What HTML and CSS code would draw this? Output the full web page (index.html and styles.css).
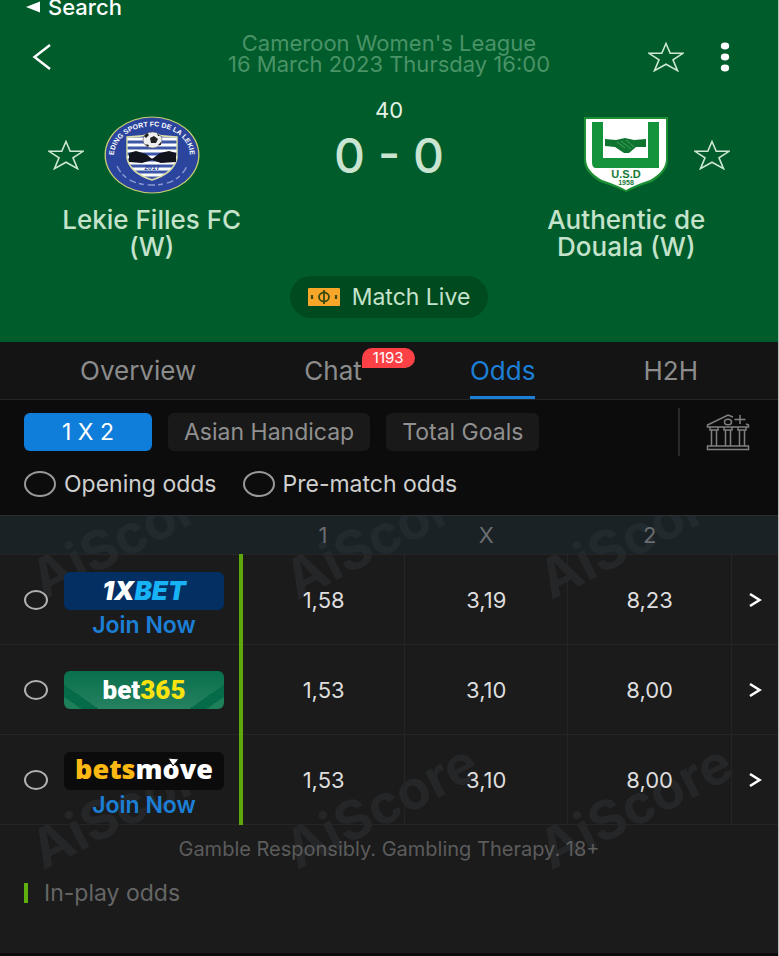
FILE: index.html
```html
<!DOCTYPE html>
<html lang="en">
<head>
  <meta charset="UTF-8" />
  <meta name="viewport" content="width=device-width, initial-scale=1.0" />
  <title>Lekie Filles FC (W) - Authentic de Douala (W) Odds</title>
  <link rel="stylesheet" href="styles.css">
</head>
<body>
  <svg class="defs" aria-hidden="true">
    <symbol id="star" viewBox="0 0 36 30">
      <path d="M18 1.5 L22.2 11.3 H35 L25 17.8 L29.5 28.6 L18 22.2 L6.5 28.6 L11 17.8 L1 11.3 H13.8 Z" fill="none" stroke="currentColor" stroke-width="1.6" />
    </symbol>
    <symbol id="arrow" viewBox="0 0 14 16">
      <path d="M2 2 L11.5 8 L2 14" fill="none" stroke="currentColor" stroke-width="2.6" />
    </symbol>
  </svg>

  <header class="match">
    <a class="back-app" href="#">
      <svg width="14" height="12" viewBox="0 0 14 12"><path d="M0 6 L14 0.5 V11.5 Z" fill="currentColor" /></svg>
      Search
    </a>

    <div class="topbar">
      <button class="icon-btn back" aria-label="Back">
        <svg width="20" height="28" viewBox="0 0 20 28"><path d="M18 2 L2.5 14 L18 26" fill="none" stroke="currentColor" stroke-width="2.4" /></svg>
      </button>
      <div class="league">
        <div>Cameroon Women's League</div>
        <div>16 March 2023 Thursday 16:00</div>
      </div>
      <div class="actions">
        <button class="icon-btn star" aria-label="Favourite match"><svg width="36" height="30"><use href="#star" /></svg></button>
        <button class="icon-btn" aria-label="More">
          <svg width="10" height="30" viewBox="0 0 10 30" fill="currentColor">
            <ellipse cx="5" cy="4" rx="4.2" ry="3.4" /><ellipse cx="5" cy="15" rx="4.2" ry="3.4" /><ellipse cx="5" cy="26" rx="4.2" ry="3.4" />
          </svg>
        </button>
      </div>
    </div>

    <div class="teams">
      <div class="team home">
        <button class="icon-btn star" aria-label="Favourite Lekie Filles FC"><svg width="36" height="30"><use href="#star" /></svg></button>
        <svg class="crest" width="96" height="78" viewBox="0 0 96 78">
          <defs>
            <path id="ring" d="M11 46 A38 29 0 1 1 85 46" />
            <clipPath id="shield"><path d="M23 21 Q36 21 48 18 Q60 21 73 21 V42 Q70 57 48 64 Q26 57 23 42 Z" /></clipPath>
          </defs>
          <ellipse cx="48" cy="39" rx="47.5" ry="38.5" fill="#c9cf72" />
          <ellipse cx="48" cy="39" rx="46.2" ry="37.4" fill="#2b459e" />
          <text class="crest-text"><textPath href="#ring" startOffset="50%" text-anchor="middle">EDING SPORT FC DE LA LEKIE</textPath></text>
          <path d="M13 50 Q22 69 48 69 Q74 69 83 50" fill="none" stroke="#8d9dd2" stroke-width="1.4" stroke-dasharray="7 3 5 4" />
          <g clip-path="url(#shield)">
            <rect x="20" y="16" width="56" height="50" fill="#3c56a8" />
            <path d="M20 23H76M20 29H76M20 35H76M20 41H76M20 47H76M20 53H76M20 59H76" stroke="#fff" stroke-width="3" />
          </g>
          <path d="M23 21 Q36 21 48 18 Q60 21 73 21 V42 Q70 57 48 64 Q26 57 23 42 Z" fill="none" stroke="#dcdfa8" stroke-width="1.4" />
          <path d="M25 37 L32 35 L42 38 L48 43 L56 37 L65 35 L72 37 V46 L57 47 L48 44 L38 47 L25 46 Z" fill="#11131d" />
          <text class="crest-year" x="48" y="54" text-anchor="middle">2017</text>
          <ellipse cx="48.5" cy="24" rx="9.5" ry="8" fill="#eee" stroke="#555" stroke-width=".6" />
          <path d="M46 22 L50 20 L54 23 L52 27 L47 27 Z M40 20 L43 17 L45 19 L42 22 Z M53 17 L56 20 L54 20 Z M41 28 L45 29 L44 31 Z M54 29 L57 26 L57 29 Z" fill="#222" />
        </svg>
        <h2>Lekie Filles FC (W)</h2>
      </div>

      <div class="score">
        <div class="minute">40</div>
        <div class="goals">0 - 0</div>
      </div>

      <div class="team away">
        <svg class="crest" width="96" height="78" viewBox="0 0 96 78">
          <path d="M6 1 H90 V44 Q90 56 74 66 Q58 71 48 76 Q38 71 22 66 Q6 56 6 44 Z" fill="#1d8f35" />
          <path d="M8 3 H88 V43 Q88 55 72 64 Q57 69 48 74 Q39 69 24 64 Q8 55 8 43 Z" fill="#fff" />
          <path d="M14 6 H25 V42 H70 V6 H81 V52 H18 Q14 52 14 46 Z" fill="#15933a" />
          <path d="M27 23 L38 24 L47 22 L56 24 L68 23 V31 L58 31 L51 37 L46 37 L37 31 L27 30 Z" fill="#0f7430" />
          <path d="M39 26 L47 32 M43 25 L53 33 M48 24 L56 31" stroke="#3fa35b" stroke-width="1" fill="none" />
          <text class="usd" x="48" y="62" text-anchor="middle">U.S.D</text>
          <text class="usd-year" x="48" y="69" text-anchor="middle">1958</text>
        </svg>
        <button class="icon-btn star" aria-label="Favourite Authentic de Douala"><svg width="36" height="30"><use href="#star" /></svg></button>
        <h2>Authentic de Douala (W)</h2>
      </div>
    </div>

    <button class="live">
      <svg width="32" height="18" viewBox="0 0 32 18">
        <rect width="32" height="18" rx="1" fill="#f7a62a" />
        <ellipse cx="16" cy="9" rx="5" ry="4.5" fill="none" stroke="#3a4a10" stroke-width="1.8" />
        <path d="M16 2 V16" stroke="#3a4a10" stroke-width="1.8" />
        <path d="M4 7 V11 M28 7 V11" stroke="#3a4a10" stroke-width="2.2" />
      </svg>
      Match Live
    </button>
  </header>

  <nav class="tabs">
    <a href="#">Overview</a>
    <a href="#">Chat<span class="badge">1193</span></a>
    <a href="#" class="active">Odds</a>
    <a href="#">H2H</a>
  </nav>

  <section class="filters">
    <div class="markets">
      <button class="chip selected">1 X 2</button>
      <button class="chip">Asian Handicap</button>
      <button class="chip">Total Goals</button>
      <button class="icon-btn bookmakers" aria-label="Bookmakers">
        <svg width="44" height="38" viewBox="0 0 44 38" fill="none" stroke="currentColor" stroke-width="1.5">
          <path d="M27 4 L22 2 L1.5 12 V14 H42.5 V12 L40 11" />
          <ellipse cx="22" cy="9" rx="3.5" ry="2.8" />
          <path d="M34 2 V11 M28.5 6.5 H39.5" />
          <path d="M4 14 V17 H12 V14 M18 14 V17 H26 V14 M32 14 V17 H40 V14" />
          <path d="M5.5 17 V33 M10.5 17 V33 M19.5 17 V33 M24.5 17 V33 M33.5 17 V33 M38.5 17 V33" />
          <rect x="1.5" y="33" width="41" height="3.5" />
        </svg>
      </button>
    </div>
    <div class="moments">
      <label><input type="radio" name="moment" value="opening"> Opening odds</label>
      <label><input type="radio" name="moment" value="prematch"> Pre-match odds</label>
    </div>
  </section>

  <main class="odds">
    <div class="watermarks" aria-hidden="true">
      <span>AiScore</span><span>AiScore</span><span>AiScore</span>
      <span>AiScore</span><span>AiScore</span><span>AiScore</span>
    </div>

    <table>
      <thead>
        <tr>
          <th class="book-col"></th>
          <th>1</th>
          <th>X</th>
          <th>2</th>
          <th class="more-col"></th>
        </tr>
      </thead>
      <tbody>
        <tr>
          <td class="book-col">
            <div class="book">
              <input type="radio" name="book" aria-label="1XBET">
              <div class="offer">
                <div class="logo xbet">1X<span>BET</span></div>
                <a class="join" href="#">Join Now</a>
              </div>
            </div>
          </td>
          <td>1,58</td>
          <td>3,19</td>
          <td>8,23</td>
          <td><button class="icon-btn" aria-label="1XBET details"><svg width="14" height="16"><use href="#arrow" /></svg></button></td>
        </tr>
        <tr>
          <td class="book-col">
            <div class="book">
              <input type="radio" name="book" aria-label="bet365">
              <div class="logo bet365">bet<span>365</span></div>
            </div>
          </td>
          <td>1,53</td>
          <td>3,10</td>
          <td>8,00</td>
          <td><button class="icon-btn" aria-label="bet365 details"><svg width="14" height="16"><use href="#arrow" /></svg></button></td>
        </tr>
        <tr>
          <td class="book-col">
            <div class="book">
              <input type="radio" name="book" aria-label="betsmove">
              <div class="offer">
                <div class="logo betsmove"><span>bets</span>m<b>o<svg viewBox="0 0 14 10"><path d="M1 0 L12 1 L6 8 Z" fill="#fff" stroke="#0b0b0b" stroke-width="1" /></svg></b>ve</div>
                <a class="join" href="#">Join Now</a>
              </div>
            </div>
          </td>
          <td>1,53</td>
          <td>3,10</td>
          <td>8,00</td>
          <td><button class="icon-btn" aria-label="betsmove details"><svg width="14" height="16"><use href="#arrow" /></svg></button></td>
        </tr>
      </tbody>
    </table>

    <p class="notice">Gamble Responsibly. Gambling Therapy. 18+</p>
    <p class="legend">In-play odds</p>
  </main>
</body>
</html>
```

FILE: styles.css
```css
* {
  box-sizing: border-box;
}

body {
  margin: 0;
  min-height: 100vh;
  display: flex;
  flex-direction: column;
  font-family: Inter, "Liberation Sans", sans-serif;
  font-size: 22px;
  color: #ddd;
  background: #1b1b1b;
  border-right: 1px solid #b9bdb9;
}

button {
  font: inherit;
  border: 0;
  cursor: pointer;
}

a {
  color: inherit;
  text-decoration: none;
}

h2, p {
  margin: 0;
}

.defs {
  position: absolute;
  width: 0;
  height: 0;
}

.icon-btn {
  display: flex;
  padding: 0;
  color: #fff;
  background: none;
}

.icon-btn.star {
  color: #cfe8d3;
}

/* match header */
.match {
  display: flex;
  flex-direction: column;
  background: #005c2b;
  padding-bottom: 24px;
}

.back-app {
  display: flex;
  align-items: center;
  gap: 8px;
  height: 14px;
  padding-left: 26px;
  font-size: 22px;
  font-weight: 500;
  line-height: 14px;
  color: #fff;
}

.topbar {
  display: grid;
  grid-template-columns: 1fr auto 1fr;
  align-items: center;
  height: 86px;
  padding: 0 32px;
}

.league {
  font-size: 22px;
  line-height: 21px;
  text-align: center;
  color: #4a9367;
  padding-bottom: 6px;
}

.actions {
  display: flex;
  justify-content: flex-end;
  gap: 36px;
  padding-right: 16px;
}

.teams {
  display: grid;
  grid-template-columns: 39fr 22fr 39fr;
}

.team {
  display: grid;
  grid-template-columns: 1fr 96px 1fr;
  column-gap: 20px;
  align-items: center;
  padding-top: 16px;
}

.crest {
  grid-column: 2;
}

.home .star {
  justify-self: end;
}

.team h2 {
  grid-column: 1 / -1;
  justify-self: center;
  width: 208px;
  margin-top: 12px;
  font-size: 26px;
  font-weight: 500;
  line-height: 27px;
  text-align: center;
  color: #c5e3cb;
}

.crest-text {
  font: bold 7px "Liberation Sans", sans-serif;
  fill: #fff;
}

.crest-year {
  font: bold 7px "Liberation Sans", sans-serif;
  fill: #2b459e;
}

.usd {
  font: bold 11px "Liberation Sans", sans-serif;
  fill: #157a34;
}

.usd-year {
  font: bold 7px "Liberation Sans", sans-serif;
  fill: #157a34;
}

.score {
  text-align: center;
}

.minute {
  font-size: 22px;
  line-height: 20px;
  color: #e4f3e6;
}

.goals {
  margin-top: 12px;
  font-size: 48px;
  font-weight: 500;
  line-height: 48px;
  white-space: nowrap;
  color: #c9e4d0;
}

.live {
  display: flex;
  align-items: center;
  gap: 12px;
  height: 42px;
  margin: 16px auto 0;
  padding: 0 18px;
  font-size: 23px;
  color: #c5e3cb;
  background: #004a20;
  border-radius: 21px;
}

/* tabs */
.tabs {
  display: flex;
  justify-content: space-between;
  height: 58px;
  padding: 0 80px;
  font-size: 26px;
  line-height: 57px;
  color: #8c8c8c;
  background: #141414;
  border-bottom: 1px solid #252525;
}

.tabs a {
  position: relative;
}

.tabs .active {
  color: #1c7fd6;
  border-bottom: 3px solid #1c7fd6;
}

.badge {
  position: absolute;
  top: 6px;
  left: 100%;
  padding: 0 11px;
  font-size: 15px;
  line-height: 20px;
  color: #fff;
  background: #fb4145;
  border-radius: 10px 10px 10px 0;
}

/* market filters */
.filters {
  padding: 8px 28px 17px 24px;
  background: #0c0c0c;
}

.markets {
  display: flex;
  align-items: center;
  gap: 16px;
  height: 48px;
}

.chip {
  height: 38px;
  min-width: 128px;
  padding: 0 16px;
  font-size: 23px;
  white-space: nowrap;
  color: #909090;
  background: #191919;
  border-radius: 6px;
}

.chip.selected {
  color: #fff;
  background: #0f7edb;
}

.bookmakers {
  align-items: center;
  height: 48px;
  margin-left: auto;
  padding-left: 26px;
  color: #808080;
  border-left: 2px solid #2a2a2a;
}

.moments {
  display: flex;
  gap: 26px;
  margin-top: 14px;
  font-size: 23px;
  line-height: 28px;
  color: #d0d0d0;
}

.moments label {
  display: flex;
  align-items: center;
  gap: 8px;
}

input[type="radio"] {
  appearance: none;
  flex: none;
  width: 24px;
  height: 20px;
  margin: 0;
  border: 2px solid #b0b0b0;
  border-radius: 50%;
}

input[type="radio"]:checked {
  background: #0f7edb;
}

.moments input[type="radio"] {
  width: 32px;
  height: 26px;
  border-color: #999;
}

/* odds table */
.odds {
  position: relative;
  flex: 1;
  border-bottom: 3px solid #0c0c0c;
}

.watermarks {
  position: absolute;
  inset: 0 16px 0 0;
  display: grid;
  grid-template-columns: repeat(3, 1fr);
  grid-auto-rows: 40px;
  row-gap: 230px;
  place-items: center;
  overflow: hidden;
  font-size: 54px;
  font-weight: 700;
  color: #252627;
}

.watermarks span {
  transform: rotate(-27deg);
}

table {
  position: relative;
  width: 100%;
  table-layout: fixed;
  border-collapse: collapse;
}

th {
  width: 21%;
  height: 39px;
  padding: 0;
  font-weight: 400;
  color: #6a6d6f;
  background: rgba(28, 52, 62, 0.3);
  border-top: 1px solid #2c2f30;
}

th.book-col {
  width: 238px;
}

th.more-col {
  width: 6%;
}

td {
  height: 90px;
  padding: 0;
  text-align: center;
  border: 1px solid #252525;
}

td:last-child {
  border-right: 0;
}

td .icon-btn {
  margin: 0 auto;
}

td.book-col {
  border-left: 0;
  border-right: 4px solid #5fa80c;
}

.book {
  display: flex;
  align-items: center;
  gap: 16px;
  padding-left: 24px;
}

.offer {
  padding-top: 12px;
}

.logo {
  width: 160px;
  height: 38px;
  line-height: 38px;
  color: #fff;
  border-radius: 6px;
}

.xbet {
  font-size: 26px;
  font-weight: 900;
  font-style: italic;
  background: #042f63;
}

.xbet span {
  color: #17b3f5;
}

.bet365 {
  font-family: Roboto, sans-serif;
  font-size: 26px;
  font-weight: 900;
  background:
    linear-gradient(35deg, #1e8059 10px, #056b48 10px, #056b48 20px, transparent 20px),
    linear-gradient(-35deg, #1e8059 10px, #056b48 10px, #056b48 20px, transparent 20px),
    linear-gradient(#08704c, #26815f);
}

.bet365 span {
  color: #fbe30f;
}

.betsmove {
  font-family: "Open Sans", sans-serif;
  font-size: 27px;
  font-weight: 800;
  line-height: 34px;
  background: #0b0b0b;
}

.betsmove span {
  color: #fdb913;
}

.betsmove b {
  position: relative;
  font-weight: 800;
}

.betsmove svg {
  position: absolute;
  top: 8px;
  left: 4px;
  width: 14px;
  height: 10px;
}

.join {
  display: block;
  font-size: 23px;
  font-weight: 600;
  line-height: 30px;
  color: #1c7fd6;
}

.notice {
  position: relative;
  margin-top: 12px;
  font-size: 20px;
  line-height: 24px;
  text-align: center;
  color: #5c5c5c;
}

.legend {
  position: relative;
  margin: 22px 24px 0;
  padding-left: 16px;
  font-size: 23px;
  line-height: 20px;
  color: #666;
  border-left: 4px solid #5fb00c;
}
```
